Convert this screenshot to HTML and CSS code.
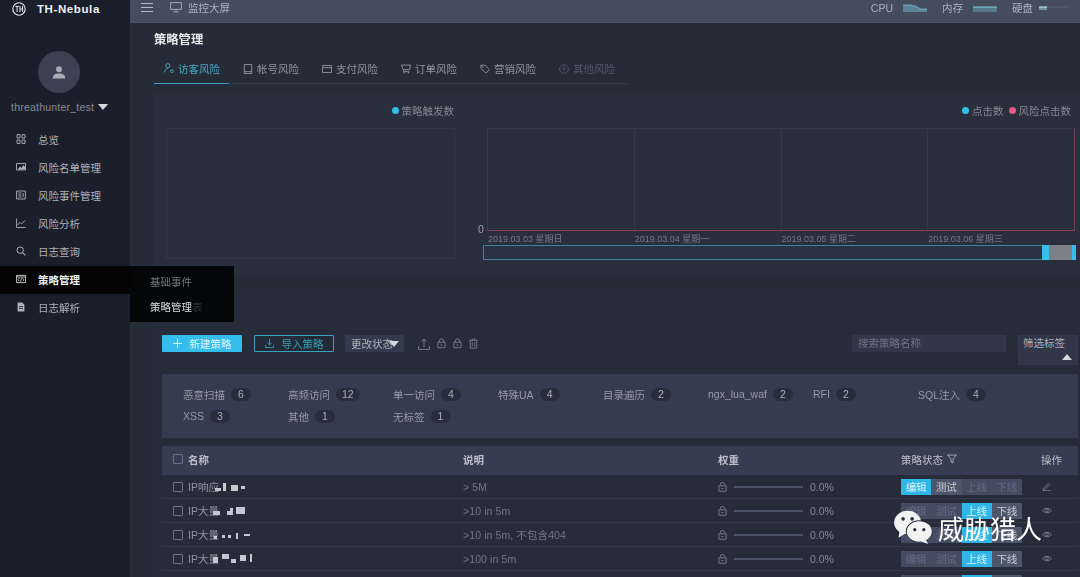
FILE: index.html
```html
<!DOCTYPE html>
<html lang="zh">
<head>
<meta charset="utf-8">
<title>TH-Nebula 策略管理</title>
<link rel="stylesheet" href="styles.css">
</head>
<body>
<svg class="defs" width="0" height="0" aria-hidden="true">
  <symbol id="lock" viewBox="0 0 10 11"><path d="M2.5 4V2.8a2.5 2.3 0 0 1 5 0V4M1 4.2h8v6H1zM3.8 7.2h2.4" fill="none" stroke="currentColor" stroke-width=".9"/></symbol>
  <symbol id="eye" viewBox="0 0 12 8"><path d="M.6 4C3 .4 9 .4 11.4 4 9 7.6 3 7.6.6 4z" fill="none" stroke="currentColor" stroke-width=".9"/><circle cx="6" cy="4" r="1.8" fill="none" stroke="currentColor" stroke-width=".9"/></symbol>
</svg>
<div class="app">
  <aside class="sidebar">
    <div class="logo">
      <svg class="logo-mark" viewBox="0 0 14 14"><circle cx="7" cy="7" r="6.2" fill="none" stroke="#e8eaee" stroke-width="1.1"/><path d="M3.4 4.4h3.4M5.1 4.4v5.6M8 4v6M10.6 4v6M8 7h2.6" fill="none" stroke="#e8eaee" stroke-width="1"/></svg>
      <span class="logo-text">TH-Nebula</span>
    </div>
    <div class="avatar">
      <svg viewBox="0 0 14 14" width="14" height="14"><circle cx="7" cy="4.2" r="3" fill="#a9adb8"/><path d="M.8 13.4c0-3.6 2.6-4.8 6.2-4.8s6.2 1.2 6.2 4.8z" fill="#a9adb8"/></svg>
    </div>
    <div class="user"><span>threathunter_test</span><i class="caret"></i></div>
    <nav class="menu">
      <a class="item"><svg class="mi" viewBox="0 0 10 10"><path d="M1 .6h3v3.4H1zM6 .6h3v3.4H6zM1 6h3v3.4H1zM6 6h3v3.4H6z" fill="none" stroke="currentColor" stroke-width=".9"/></svg>总览</a>
      <a class="item"><svg class="mi" viewBox="0 0 10 10"><path d="M.5 1.5h9v6.5h-9z" fill="none" stroke="currentColor" stroke-width=".9"/><path d="M1.5 7.5l2.5-3 1.5 1.5 2-3 1.5 2v2.5z" fill="currentColor"/></svg>风险名单管理</a>
      <a class="item"><svg class="mi" viewBox="0 0 10 10"><path d="M.6 1h8.8v8H.6zM2.4 3h3M2.4 5h3M2.4 7h3M7.2 3v4" fill="none" stroke="currentColor" stroke-width=".9"/></svg>风险事件管理</a>
      <a class="item"><svg class="mi" viewBox="0 0 10 10"><path d="M.6.5v9h9M1.6 7l2.4-2.6 1.6 1.4 3.4-3.4" fill="none" stroke="currentColor" stroke-width=".9"/></svg>风险分析</a>
      <a class="item"><svg class="mi" viewBox="0 0 10 10"><circle cx="4.2" cy="4.2" r="3.2" fill="none" stroke="currentColor" stroke-width="1"/><path d="M6.6 6.6l2.8 2.8" stroke="currentColor" stroke-width="1.1"/></svg>日志查询</a>
      <a class="item active"><svg class="mi" viewBox="0 0 10 10"><path d="M.4 1.4h9.2v7.2H.4zM.4 3h9.2M3.4 4.2L2 5.8l1.4 1.4M6.6 4.2L8 5.8 6.6 7.2M5.6 4L4.4 7.6" fill="none" stroke="currentColor" stroke-width=".8"/></svg>策略管理</a>
      <a class="item"><svg class="mi" viewBox="0 0 10 10"><path d="M1.6.6h4.6l2.2 2.2v6.6H1.6z" fill="currentColor"/><path d="M3 4.6h4M3 6.4h4" stroke="#1b1f2b" stroke-width=".8"/></svg>日志解析</a>
    </nav>
  </aside>

  <main class="main">
    <header class="topbar">
      <div class="burger"><i></i><i></i><i></i></div>
      <svg class="top-ic" viewBox="0 0 12 11"><path d="M.6.6h10.8v6.8H.6zM6 7.4v2.4M3.4 10h5.2" fill="none" stroke="currentColor" stroke-width=".9"/></svg>
      <span class="screen">监控大屏</span>
      <div class="stats">
        <span>CPU</span>
        <svg class="spark" viewBox="0 0 24 8"><path d="M0 1h8l4 1 6 3h6v3H0z" fill="#5d8494"/><path d="M0 1h8l4 1 6 3h6" fill="none" stroke="#7fc4d9" stroke-width=".7"/></svg>
        <span class="s2">内存</span>
        <svg class="spark" viewBox="0 0 24 8"><path d="M0 3h24v5H0z" fill="#55798a"/><path d="M0 3h24" stroke="#8fd5ea" stroke-width=".9"/></svg>
        <span class="s2">硬盘</span>
        <svg class="spark wide" viewBox="0 0 29 8"><path d="M0 3h8v3H0z" fill="#6e929a"/><path d="M0 3h8" stroke="#c8f2f2" stroke-width="1"/><path d="M8 3h21" stroke="#5c6d78" stroke-width=".8"/></svg>
      </div>
    </header>

    <div class="head">
      <h1 class="title">策略管理</h1>
      <div class="tabs">
        <a class="tab on"><svg class="ti" viewBox="0 0 11 11"><circle cx="4.2" cy="3" r="2.3" fill="none" stroke="currentColor"/><path d="M.6 10.4c.2-3 1.6-4.4 3.6-4.4M7 9a1.6 1.6 0 1 0 3.2 0A1.6 1.6 0 1 0 7 9z" fill="none" stroke="currentColor"/></svg>访客风险</a>
        <a class="tab"><svg class="ti" viewBox="0 0 11 11"><path d="M1.4.6h8.2v9.8H1.4zM1.4 8.4h8.2" fill="none" stroke="currentColor"/></svg>帐号风险</a>
        <a class="tab"><svg class="ti" viewBox="0 0 11 11"><path d="M.6 1.6h9.8v7.8H.6zM.6 4h9.8" fill="none" stroke="currentColor"/></svg>支付风险</a>
        <a class="tab"><svg class="ti" viewBox="0 0 11 11"><path d="M.4 1.2h10l-1 5H2.4zM2.8 6.4v2h6.4" fill="none" stroke="currentColor"/><circle cx="3.4" cy="9.6" r=".9" fill="currentColor"/><circle cx="8.4" cy="9.6" r=".9" fill="currentColor"/></svg>订单风险</a>
        <a class="tab"><svg class="ti" viewBox="0 0 11 11"><path d="M.8 1.4l4.6-.2 5 5-3.8 3.8-5.6-5z" fill="none" stroke="currentColor"/><circle cx="3" cy="3.4" r=".8" fill="currentColor"/></svg>营销风险</a>
        <a class="tab off"><svg class="ti" viewBox="0 0 11 11"><circle cx="5.5" cy="5.5" r="4.8" fill="none" stroke="currentColor"/><path d="M5.5 2.6v4M3.6 5l1.9 2 1.9-2" fill="none" stroke="currentColor"/></svg>其他风险</a>
      </div>
    </div>

    <section class="charts">
      <div class="chart-l">
        <div class="legend"><i class="dot blue"></i>策略触发数</div>
        <div class="plot-l"></div>
      </div>
      <div class="chart-r">
        <div class="legend"><i class="dot blue"></i>点击数<i class="dot pink"></i>风险点击数</div>
        <div class="plot-r">
          <span class="zero">0</span>
          <div class="cell"></div><div class="cell"></div><div class="cell"></div><div class="cell"></div>
        </div>
        <div class="axis">
          <span>2019.03.03 星期日</span><span>2019.03.04 星期一</span><span>2019.03.05 星期二</span><span>2019.03.06 星期三</span>
        </div>
        <div class="slider"><div class="handle"></div></div>
      </div>
    </section>

    <section class="lower">
      <div class="toolbar">
        <a class="btn primary"><svg class="bi" viewBox="0 0 9 9"><path d="M4.5 0v9M0 4.5h9" stroke="currentColor"/></svg>新建策略</a>
        <a class="btn ghost"><svg class="bi" viewBox="0 0 9 9"><path d="M4.5 0v5.6M2.4 3.8l2.1 2 2.1-2M.4 6v2.5h8.2V6" fill="none" stroke="currentColor" stroke-width=".9"/></svg>导入策略</a>
        <div class="select">更改状态<i class="caret overlap"></i></div>
        <div class="tools">
          <svg class="tool" viewBox="0 0 12 12"><path d="M6 9V1M3.4 3.4L6 1l2.6 2.4M.6 8v3.4h10.8V8" fill="none" stroke="currentColor" stroke-width=".9"/></svg>
          <svg class="tool narrow"><use href="#lock"/></svg>
          <svg class="tool narrow"><use href="#lock"/></svg>
          <svg class="tool narrow" viewBox="0 0 10 11"><path d="M.4 2h9.2M3.4 2V.6h3.2V2M1.4 2v8.6h7.2V2M3.6 4v4.6M6.4 4v4.6" fill="none" stroke="currentColor" stroke-width=".9"/></svg>
        </div>
        <div class="search">搜索策略名称</div>
        <div class="filter">筛选标签<i class="caret up"></i></div>
      </div>

      <div class="tags">
        <div class="tag">恶意扫描<b>6</b></div>
        <div class="tag">高频访问<b>12</b></div>
        <div class="tag">单一访问<b>4</b></div>
        <div class="tag">特殊UA<b>4</b></div>
        <div class="tag">目录遍历<b>2</b></div>
        <div class="tag">ngx_lua_waf<b>2</b></div>
        <div class="tag">RFI<b>2</b></div>
        <div class="tag">SQL注入<b>4</b></div>
        <div class="tag">XSS<b>3</b></div>
        <div class="tag">其他<b>1</b></div>
        <div class="tag">无标签<b>1</b></div>
      </div>

      <div class="table">
        <div class="row thead">
          <div class="name"><i class="check"></i>名称</div>
          <div>说明</div>
          <div>权重</div>
          <div class="st">策略状态<svg class="funnel" viewBox="0 0 10 10"><path d="M.6 1h8.8L6 5v4L4 8V5z" fill="none" stroke="currentColor" stroke-width=".8"/></svg></div>
          <div>操作</div>
        </div>

        <div class="row">
          <div class="name"><i class="check"></i>IP响应<svg class="mosaic" viewBox="0 0 40 10"><path d="M3 6h6v3H3zM11 1h3v8h-3zM19 3h7v6h-7zM29 4h4v3h-4z"/></svg></div>
          <div class="desc">&gt; 5M</div>
          <div class="wt"><svg class="wl"><use href="#lock"/></svg><span class="bar"></span>0.0%</div>
          <div class="states"><span class="cy">编辑</span><span class="br">测试</span><span>上线</span><span>下线</span></div>
          <div class="act"><svg class="ai" viewBox="0 0 10 10"><path d="M1 7.2L6.8 1.4l1.4 1.4L2.4 8.6 1 8.8zM0 9.6h9.4" fill="none" stroke="currentColor" stroke-width=".8"/></svg></div>
        </div>

        <div class="row">
          <div class="name"><i class="check"></i>IP大量<svg class="mosaic" viewBox="0 0 40 10"><path d="M1 5h7v4H1zM15 5h3V2h3v7h-6zM24 1h9v7h-9z"/></svg></div>
          <div class="desc">&gt;10 in 5m</div>
          <div class="wt"><svg class="wl"><use href="#lock"/></svg><span class="bar"></span>0.0%</div>
          <div class="states"><span>编辑</span><span>测试</span><span class="cy">上线</span><span class="br">下线</span></div>
          <div class="act"><svg class="ai"><use href="#eye"/></svg></div>
        </div>

        <div class="row">
          <div class="name"><i class="check"></i>IP大量<svg class="mosaic" viewBox="0 0 40 10"><path d="M2 6h3v3H2zM10 5h3v3h-3zM16 5h3v3h-3zM24 3h2v6h-2zM32 4h6v2h-6z"/></svg></div>
          <div class="desc">&gt;10 in 5m, 不包含404</div>
          <div class="wt"><svg class="wl"><use href="#lock"/></svg><span class="bar"></span>0.0%</div>
          <div class="states"><span>编辑</span><span>测试</span><span class="cy">上线</span><span class="br">下线</span></div>
          <div class="act"><svg class="ai"><use href="#eye"/></svg></div>
        </div>

        <div class="row">
          <div class="name"><i class="check"></i>IP大量<svg class="mosaic" viewBox="0 0 40 10"><path d="M1 3h5v6H1zM10 0h7v5h-7zM19 5h5v4h-5zM28 1h6v6h-6zM38 0h3v8h-3z"/></svg></div>
          <div class="desc">&gt;100 in 5m</div>
          <div class="wt"><svg class="wl"><use href="#lock"/></svg><span class="bar"></span>0.0%</div>
          <div class="states"><span>编辑</span><span>测试</span><span class="cy">上线</span><span class="br">下线</span></div>
          <div class="act"><svg class="ai"><use href="#eye"/></svg></div>
        </div>

        <div class="row">
          <div class="name"><i class="check"></i>IP大量访问</div>
          <div class="desc">&gt;100 in 5m</div>
          <div class="wt"><svg class="wl"><use href="#lock"/></svg><span class="bar"></span>0.0%</div>
          <div class="states"><span>编辑</span><span>测试</span><span class="cy">上线</span><span class="br">下线</span></div>
          <div class="act"><svg class="ai"><use href="#eye"/></svg></div>
        </div>
      </div>
    </section>
  </main>
</div>

<div class="submenu">
  <a>基础事件</a>
  <a class="cur">策略管理<span class="ghost-char">表</span></a>
</div>

<div class="watermark">
  <svg class="wechat" viewBox="0 0 44 40">
    <ellipse cx="16" cy="15" rx="15" ry="13" fill="#f2f2f2"/>
    <path d="M7 24l-1 8 8-5z" fill="#f2f2f2"/>
    <circle cx="11" cy="11" r="2" fill="#2a2f3c"/><circle cx="21" cy="11" r="2" fill="#2a2f3c"/>
    <ellipse cx="29" cy="25" rx="14.5" ry="12" fill="#f2f2f2" stroke="#2a2f3c" stroke-width="1.2"/>
    <path d="M36 34l3 5-8-3z" fill="#f2f2f2"/>
    <circle cx="24" cy="23" r="1.8" fill="#2a2f3c"/><circle cx="34" cy="23" r="1.8" fill="#2a2f3c"/>
  </svg>
  <span>威胁猎人</span>
</div>
</body>
</html>
```

FILE: styles.css
```css
* { box-sizing: border-box; }
html, body { margin: 0; padding: 0; width: 1080px; height: 577px; overflow: hidden; }
body {
  position: relative;
  background: #262b38;
  color: #9a9fac;
  font-family: "Liberation Sans", "Noto Sans CJK SC", sans-serif;
  font-size: 10.5px;
}
i { display: block; font-style: normal; }
.defs { position: absolute; }
.app { display: flex; height: 577px; overflow: hidden; filter: blur(.4px); }

/* sidebar */
.sidebar { width: 130px; flex: none; background: #1b1f2b; }
.logo { display: flex; align-items: center; height: 18px; padding-left: 12px; gap: 11px; }
.logo-mark { width: 14px; height: 14px; }
.logo-text { color: #f0f1f4; font-weight: 700; font-size: 11.5px; letter-spacing: .6px; }
.avatar {
  width: 42px; height: 42px; border-radius: 50%; background: #3d4252;
  margin: 33px 0 0 38px; display: flex; align-items: center; justify-content: center;
}
.user { display: flex; align-items: center; height: 14px; margin-top: 7px; padding-left: 11px; gap: 4px; color: #868a95; letter-spacing: .22px; }
.caret { width: 0; height: 0; border-left: 5px solid transparent; border-right: 5px solid transparent; border-top: 6px solid #d5d8dd; }
.menu { margin-top: 12px; display: flex; flex-direction: column; }
.item { display: flex; align-items: center; height: 28px; padding: 0 0 2px 16px; color: #aeb2bb; }
.item.active { background: #050506; color: #eceded; font-weight: 700; }
.mi { width: 10px; height: 10px; margin-right: 12px; flex: none; }

/* main */
.main { flex: 1; min-width: 0; display: flex; flex-direction: column; }
.topbar {
  height: 23px; flex: none; display: flex; align-items: center; padding: 0 0 7px 11px;
  background: #454c5e; border-bottom: 1px solid #4c5366; color: #aab0bb;
}
.burger { width: 12px; display: flex; flex-direction: column; gap: 3px; margin-right: 17px; }
.burger i { height: 1px; background: #b6bac4; }
.top-ic { width: 12px; height: 11px; margin-right: 6px; }
.stats { margin-left: auto; display: flex; align-items: center; padding-right: 12px; }
.spark { width: 24px; height: 8px; margin-left: 10px; }
.s2 { margin-left: 15px; }
.stats .wide { width: 29px; margin-left: 6px; }

.head { height: 72px; flex: none; padding: 8px 0 0 24px; }
.title { margin: 0; font-size: 12.3px; line-height: 18px; font-weight: 700; color: #e6e8ec; }
.tabs { display: flex; width: 474px; height: 27px; margin-top: 8px; border-bottom: 1px solid #343a48; }
.tab { display: flex; align-items: center; height: 27px; width: 79.8px; padding: 0 0 4px 10px; color: #90959f; }
.tab.on { width: 76px; margin-right: 3.8px; color: #46a8c4; border-bottom: 1px solid #3f9cb8; }
.tab.off { color: #535866; }
.ti { width: 10px; height: 10px; margin-right: 4px; flex: none; }

/* charts */
.charts {
  height: 180px; flex: none; margin-left: 23px; padding-left: 13px;
  display: flex; background: #2a2f3e;
}
.chart-l { width: 289px; flex: none; }
.chart-r { width: 588px; margin-left: 32px; flex: none; }
.legend { display: flex; align-items: center; justify-content: flex-end; height: 33px; padding: 0 1px 2px 0; color: #82878f; white-space: nowrap; }
.chart-r .legend { padding-right: 4px; }
.dot { width: 7px; height: 7px; border-radius: 50%; margin-right: 3px; }
.blue { background: #35bdec; }
.pink { background: #e6597f; margin-left: 5px; }
.plot-l { height: 131px; border: 1px solid #323847; background: #2a2f3e; }
.plot-r { position: relative; display: flex; height: 103px; border-right: 1px solid #7a3a52; border-bottom: 1px solid #8c3d57; border-left: 1px solid #3a4050; border-top: 1px solid #343a4a; }
.cell { flex: 1; border-right: 1px solid #343a4a; }
.cell:last-of-type { border-right: 0; }
.zero { position: absolute; left: -10px; bottom: -5px; color: #9a9eaa; }
.axis { display: flex; height: 14px; padding: 1px 0 0 1px; color: #757a87; font-size: 9px; line-height: 14px; }
.axis span { width: 147.5px; }
.slider { position: relative; height: 15px; margin-left: -4px; margin-right: -1px; border: 1px solid #41809f; background: #2a3244; }
.handle { position: absolute; right: -1px; top: -1px; width: 34px; height: 15px; background: #7c8089; border-left: 7px solid #35bdec; border-right: 4px solid #35bdec; }

/* lower */
.lower { flex: 1; margin: 17px 0 0 23px; padding: 43px 2px 0 9px; background: #262c39; min-height: 0; }
.toolbar { display: flex; align-items: flex-start; height: 30px; }
.btn { display: flex; align-items: center; justify-content: center; width: 80px; height: 17px; border-radius: 1px; }
.primary { background: #35bdec; color: #dff5fc; }
.ghost { margin-left: 12px; border: 1px solid #38a3b8; color: #3a9cb4; background: #232b38; }
.bi { width: 9px; height: 9px; margin-right: 8px; }
.select { display: flex; align-items: center; margin-left: 11px; width: 59px; height: 17px; padding-left: 6px; background: #333a4b; color: #adb1bb; white-space: nowrap; }
.overlap { margin-left: -4px; flex: none; }
.tools { display: flex; margin-left: 14px; gap: 7px; color: #7f8490; margin-top: 3px; }
.tool { width: 12px; height: 12px; }
.tool.narrow { width: 9px; height: 11px; }
.search { margin-left: auto; width: 154px; height: 17px; padding-left: 6px; line-height: 17px; background: #313748; color: #6f7483; }
.filter { position: relative; width: 60px; height: 30px; margin-left: 12px; padding: 1px 0 0 5px; line-height: 15px; background: #313748; color: #aaaeb8; }
.caret.up { position: absolute; right: 6px; bottom: 5px; border-top: 0; border-bottom: 6px solid #d5d8dd; }

.tags {
  height: 64px; margin-top: 9px; padding: 9px 0 0 21px;
  display: grid; grid-template-columns: repeat(8, 105px); grid-auto-rows: 22px; background: #363c50;
}
.tag { display: flex; align-items: center; color: #959aa7; white-space: nowrap; }
.tag b { margin-left: 6px; min-width: 20px; height: 13px; padding: 0 6px; border-radius: 7px; line-height: 13px; text-align: center; background: #272d3c; color: #a9adb7; font-weight: 400; font-size: 10.5px; }

.table { margin-top: 8px; }
.row {
  display: grid; grid-template-columns: 290px 255px 183px 140px 1fr;
  align-items: center; height: 24px; padding-left: 11px; border-bottom: 1px solid #333948; color: #90949f;
}
.thead { height: 29px; padding-bottom: 3px; background: #363c52; border-bottom: 0; color: #bcc0c8; font-weight: 700; }
.name { display: flex; align-items: center; white-space: nowrap; }
.thead .st, .thead > div:last-child { font-weight: 400; }
.check { width: 10px; height: 10px; margin-right: 5px; border: 1px solid #6e7382; border-radius: 1px; flex: none; }
.mosaic { width: 40px; height: 10px; margin-left: -7px; fill: #c4c8d0; filter: blur(.6px); }
.desc { color: #737886; letter-spacing: .1px; }
.st { display: flex; align-items: center; }
.funnel { width: 10px; height: 10px; margin-left: 4px; }
.wt { display: flex; align-items: center; color: #858a96; }
.wl { width: 9px; height: 10px; margin-right: 7px; }
.bar { width: 69px; height: 2px; margin-right: 7px; background: #4d5366; }
.states { display: flex; width: 121px; height: 16px; }
.states span { width: 30.25px; text-align: center; line-height: 16px; background: #454c62; color: #646b82; }
.states .cy { background: #2fb6e6; color: #d5f1fb; }
.states .br { background: #4e566b; color: #c8ccd4; }
.act { display: flex; padding-left: 1px; color: #8c919c; }
.ai { width: 10px; height: 9px; }

/* overlays */
.submenu { position: absolute; left: 130px; top: 266px; width: 104px; height: 56px; padding-top: 4px; background: #050608; filter: blur(.4px); }
.submenu a { display: block; height: 25px; line-height: 24px; padding-left: 20px; color: #72767f; }
.submenu .cur { color: #d8dade; }
.ghost-char { color: #2c2f37; }
.watermark { position: absolute; left: 893px; top: 512px; display: flex; align-items: center; color: #fff; font-size: 26px; line-height: 36px; filter: blur(.3px); }
.wechat { width: 40px; height: 36px; margin-right: 5px; margin-top: -6px; }
```
